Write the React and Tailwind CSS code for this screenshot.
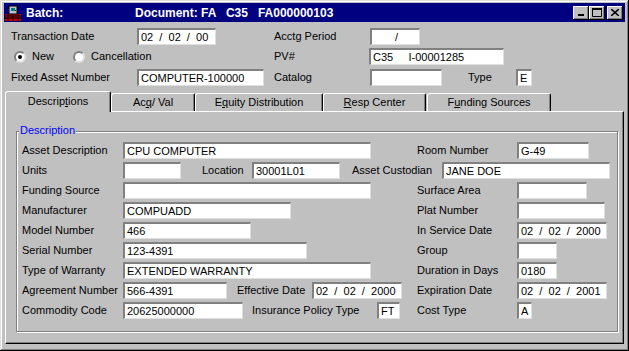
import React from 'react';

const Box = ({ w, children, center }) => (
  <div
    className={`${w} h-[17px] shrink-0 flex items-center bg-white border-t-2 border-l-2 border-t-[#808080] border-l-[#808080] border-b border-r border-b-[#dfdfdf] border-r-[#dfdfdf] pl-[2px] whitespace-pre leading-none ${center ? 'justify-center pl-0' : ''}`}
  >
    {children}
  </div>
);

const Label = ({ w, children }) => (
  <span className={`${w} shrink-0 whitespace-pre leading-none`}>{children}</span>
);

const Radio = ({ checked }) => (
  <div className="w-[12px] h-[12px] shrink-0 rounded-full bg-white border-2 border-t-[#808080] border-l-[#808080] border-b-[#dfdfdf] border-r-[#dfdfdf] flex items-center justify-center">
    {checked && <div className="w-[4px] h-[4px] rounded-full bg-black" />}
  </div>
);

const TitleButton = ({ children }) => (
  <div className="w-[16px] h-[14px] bg-[#c0c0c0] flex items-center justify-center shadow-[inset_-1px_-1px_#000,inset_1px_1px_#fff,inset_-2px_-2px_#808080]">
    {children}
  </div>
);

const Tab = ({ w, selected, children }) => (
  <div
    className={`${w} shrink-0 flex items-center justify-center bg-[#c0c0c0] border-t border-l border-white border-r border-r-black rounded-tl-[3px] rounded-tr-[2px] shadow-[inset_-1px_0_#808080] ${selected ? 'h-[21px] relative z-10 -mb-px pb-[2px]' : 'h-[18px]'}`}
  >
    {children}
  </div>
);

const Row = ({ children }) => (
  <div className="flex items-center h-[17px]">{children}</div>
);

const PcIcon = () => (
  <svg width="16" height="16" viewBox="0 0 16 16" className="shrink-0">
    <rect x="0" y="9" width="16" height="7" fill="#c00000" />
    <path d="M0 11h16M0 13h16M3 9v7M8 9v7M13 9v7" stroke="#000" strokeWidth="1" />
    <rect x="4" y="1" width="8" height="8" fill="#c0c0c0" stroke="#000" />
    <rect x="6" y="3" width="4" height="3" fill="#008080" />
    <rect x="10" y="5" width="1" height="1" fill="#000" />
  </svg>
);

export default function App() {
  return (
    <div className="w-[629px] h-[351px] bg-[#c0c0c0] px-[4px] pt-[3px] text-[11px] text-black font-['Liberation_Sans',Arial,sans-serif] shadow-[inset_-1px_-1px_#000,inset_1px_1px_#dfdfdf,inset_-2px_-2px_#808080,inset_2px_2px_#fff] overflow-hidden">
      {/* title bar */}
      <div className="h-[19px] bg-[#000080] flex items-center text-white font-bold text-[12px] pr-[2px]">
        <div className="ml-[1px]">
          <PcIcon />
        </div>
        <span className="ml-[5px] w-[109px] shrink-0">Batch:</span>
        <span className="whitespace-pre">Document: FA   C35   FA000000103</span>
        <div className="ml-auto flex items-center">
          <TitleButton>
            <svg width="8" height="8" viewBox="0 0 8 8"><rect x="1" y="5" width="6" height="2" fill="#000" /></svg>
          </TitleButton>
          <TitleButton>
            <svg width="10" height="9" viewBox="0 0 10 9"><path d="M0.5 0.5h9v8h-9z" fill="none" stroke="#000" /><rect x="0" y="0" width="10" height="2" fill="#000" /></svg>
          </TitleButton>
          <div className="ml-[2px]">
            <TitleButton>
              <svg width="8" height="7" viewBox="0 0 8 7"><path d="M0 0l8 7M8 0L0 7" stroke="#000" strokeWidth="1.6" /></svg>
            </TitleButton>
          </div>
        </div>
      </div>

      {/* header fields */}
      <div className="pt-[6px] pl-[7px]">
        <Row>
          <Label w="w-[126px]">Transaction Date</Label>
          <Box w="w-[79px]">{'02  /  02  /  00'}</Box>
          <div className="w-[58px] shrink-0" />
          <Label w="w-[96px]">Acctg Period</Label>
          <Box w="w-[50px]" center>/</Box>
        </Row>
        <div className="mt-[3px]">
          <Row>
            <div className="w-[263px] shrink-0 flex items-center">
              <div className="ml-[3px] w-[59px] flex items-center gap-[6px]">
                <Radio checked />
                <span>New</span>
              </div>
              <div className="flex items-center gap-[6px]">
                <Radio />
                <span>Cancellation</span>
              </div>
            </div>
            <Label w="w-[95px]">PV#</Label>
            <Box w="w-[135px]">{'C35     I-00001285'}</Box>
          </Row>
        </div>
        <div className="mt-[4px]">
          <Row>
            <Label w="w-[126px]">Fixed Asset Number</Label>
            <Box w="w-[127px]">COMPUTER-100000</Box>
            <div className="w-[10px] shrink-0" />
            <Label w="w-[96px]">Catalog</Label>
            <Box w="w-[72px]" />
            <div className="w-[26px] shrink-0" />
            <Label w="w-[48px]">Type</Label>
            <Box w="w-[16px]">E</Box>
          </Row>
        </div>
      </div>

      {/* tabs */}
      <div className="mt-[5px] ml-[1px] h-[20px] flex items-end">
        <Tab w="w-[106px]" selected>
          <span>Descrip<span className="underline">t</span>ions</span>
        </Tab>
        <Tab w="w-[84px]">
          <span>Ac<span className="underline">q</span>/ Val</span>
        </Tab>
        <Tab w="w-[128px]">
          <span>E<span className="underline">q</span>uity Distribution</span>
        </Tab>
        <Tab w="w-[103px]">
          <span><span className="underline">R</span>esp Center</span>
        </Tab>
        <div className="ml-[1px]">
          <Tab w="w-[124px]">
            <span>F<span className="underline">u</span>nding Sources</span>
          </Tab>
        </div>
      </div>

      {/* panel */}
      <div className="ml-[1px] w-[619px] h-[233px] border-t border-l border-white border-r border-b border-r-black border-b-black shadow-[inset_-1px_-1px_#808080] overflow-hidden">
        <div className="relative ml-[10px] mt-[19px] w-[602px] h-[201px] border border-[#808080] shadow-[1px_1px_#fff,inset_1px_1px_#fff] pt-[10px] pl-[5px]">
          <span className="absolute left-[2px] -top-[7px] bg-[#c0c0c0] px-[1px] text-[#0000ff] leading-none">Description</span>

          <div className="flex flex-col gap-[3px]">
            <Row>
              <Label w="w-[101px]">Asset Description</Label>
              <Box w="w-[248px]">CPU COMPUTER</Box>
              <div className="w-[46px] shrink-0" />
              <Label w="w-[100px]">Room Number</Label>
              <Box w="w-[72px]">G-49</Box>
            </Row>
            <Row>
              <Label w="w-[101px]">Units</Label>
              <Box w="w-[58px]" />
              <div className="w-[21px] shrink-0" />
              <Label w="w-[50px]">Location</Label>
              <Box w="w-[88px]">30001L01</Box>
              <div className="w-[12px] shrink-0" />
              <Label w="w-[90px]">Asset Custodian</Label>
              <Box w="w-[168px]">JANE DOE</Box>
            </Row>
            <Row>
              <Label w="w-[101px]">Funding Source</Label>
              <Box w="w-[248px]" />
              <div className="w-[46px] shrink-0" />
              <Label w="w-[100px]">Surface Area</Label>
              <Box w="w-[70px]" />
            </Row>
            <Row>
              <Label w="w-[101px]">Manufacturer</Label>
              <Box w="w-[168px]">COMPUADD</Box>
              <div className="w-[126px] shrink-0" />
              <Label w="w-[100px]">Plat Number</Label>
              <Box w="w-[88px]" />
            </Row>
            <Row>
              <Label w="w-[101px]">Model Number</Label>
              <Box w="w-[128px]">466</Box>
              <div className="w-[166px] shrink-0" />
              <Label w="w-[100px]">In Service Date</Label>
              <Box w="w-[90px]">{'02  /  02  /  2000'}</Box>
            </Row>
            <Row>
              <Label w="w-[101px]">Serial Number</Label>
              <Box w="w-[184px]">123-4391</Box>
              <div className="w-[110px] shrink-0" />
              <Label w="w-[100px]">Group</Label>
              <Box w="w-[40px]" />
            </Row>
            <Row>
              <Label w="w-[101px]">Type of Warranty</Label>
              <Box w="w-[248px]">EXTENDED WARRANTY</Box>
              <div className="w-[46px] shrink-0" />
              <Label w="w-[100px]">Duration in Days</Label>
              <Box w="w-[40px]">0180</Box>
            </Row>
            <Row>
              <Label w="w-[101px]">Agreement Number</Label>
              <Box w="w-[104px]">566-4391</Box>
              <div className="w-[10px] shrink-0" />
              <Label w="w-[75px]">Effective Date</Label>
              <Box w="w-[90px]">{'02  /  02  /  2000'}</Box>
              <div className="w-[15px] shrink-0" />
              <Label w="w-[100px]">Expiration Date</Label>
              <Box w="w-[90px]">{'02  /  02  /  2001'}</Box>
            </Row>
            <Row>
              <Label w="w-[101px]">Commodity Code</Label>
              <Box w="w-[120px]">20625000000</Box>
              <div className="w-[9px] shrink-0" />
              <Label w="w-[125px]">Insurance Policy Type</Label>
              <Box w="w-[23px]">FT</Box>
              <div className="w-[17px] shrink-0" />
              <Label w="w-[100px]">Cost Type</Label>
              <Box w="w-[15px]">A</Box>
            </Row>
          </div>
        </div>
      </div>
    </div>
  );
}
